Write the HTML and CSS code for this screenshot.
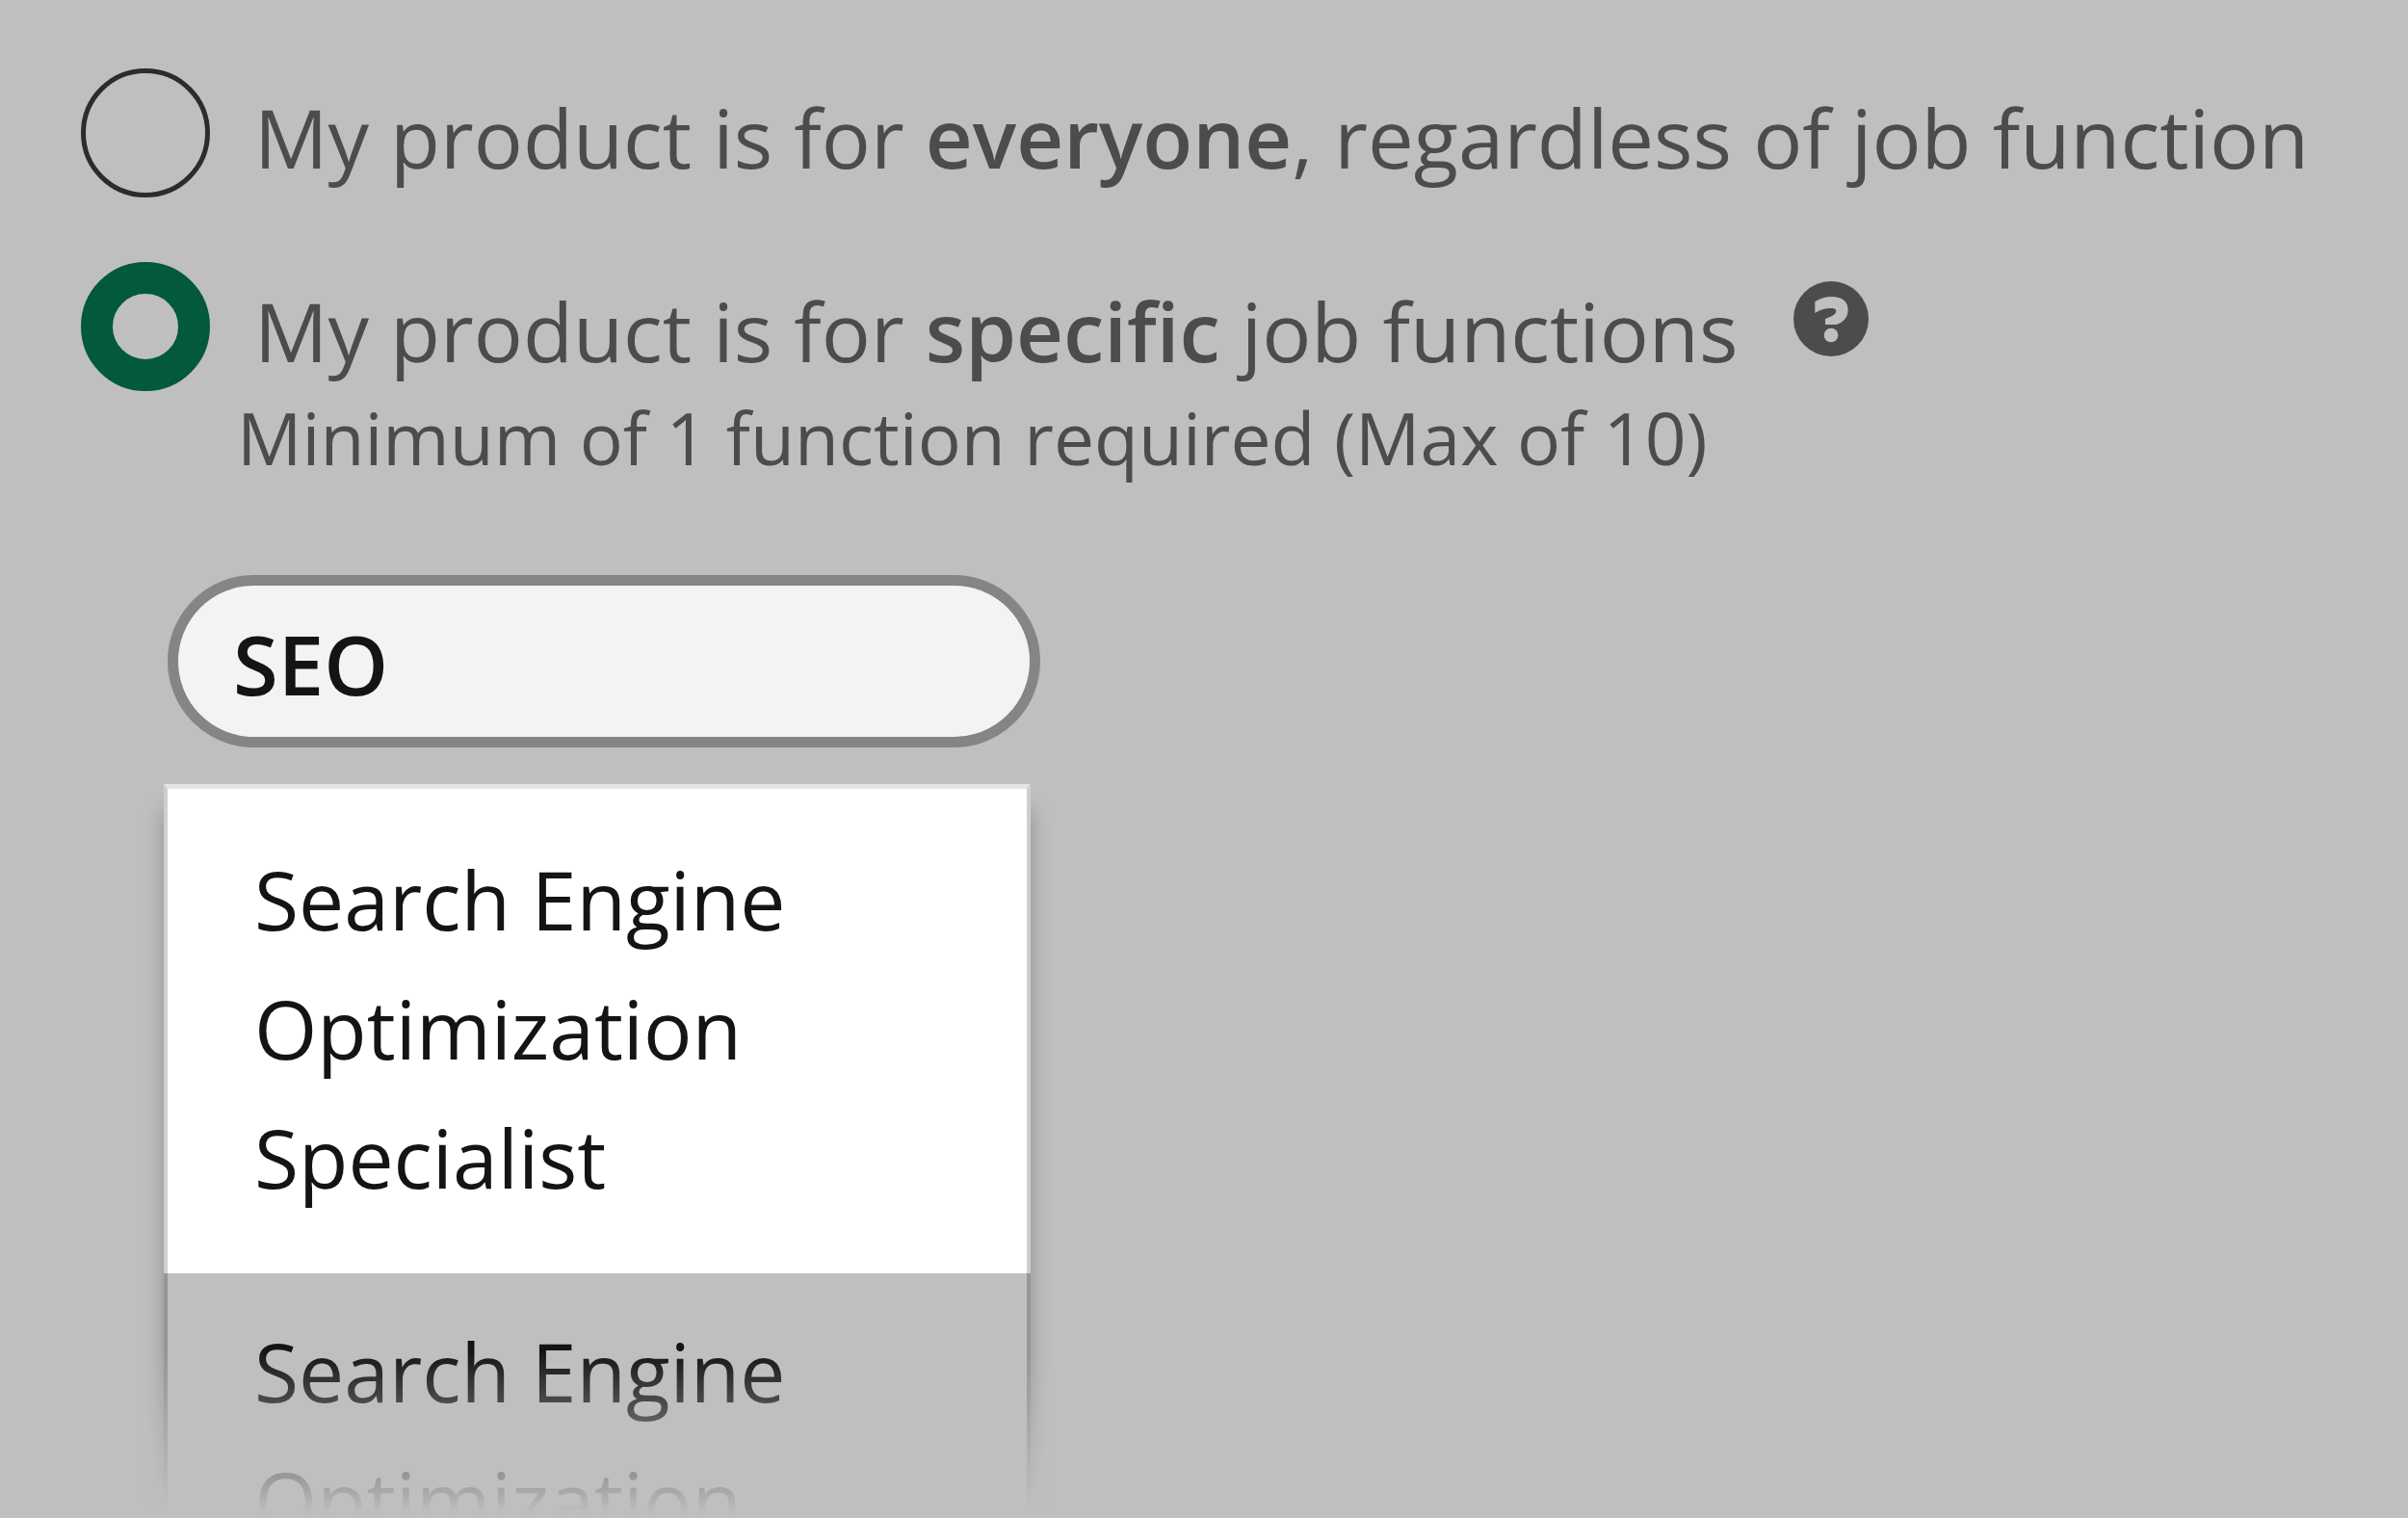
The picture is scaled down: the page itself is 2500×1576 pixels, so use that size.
FILE: index.html
```html
<!DOCTYPE html>
<html lang="en">
<head>
<meta charset="utf-8">
<meta name="viewport" content="width=device-width, initial-scale=1">
<title>Job functions</title>
<link rel="stylesheet" href="styles.css">
</head>
<body>
<form class="form">
  <div class="choice">
    <input class="radio" type="radio" name="audience" id="everyone">
    <label class="label" for="everyone">My product is for <strong>everyone</strong>, regardless of job function</label>
  </div>
  <div class="choice">
    <input class="radio" type="radio" name="audience" id="specific" checked aria-describedby="hint">
    <label class="label" for="specific">My product is for <strong>specific</strong> job functions</label>
    <button class="help" type="button" aria-label="Help">
      <svg class="help-icon" viewBox="0 0 78 78" aria-hidden="true">
        <circle cx="39" cy="39" r="39" fill="#4c4c4c"/>
        <path d="M22.3 21.3C27.5 17.8 33.500 16 40 16C50 16 56.600 21 56.600 29.500C56.600 37.500 52 42.500 44.500 45H33V39C40 36.500 44.300 34 44.300 31C44.300 28.800 42 28 38.500 28C33 28 27.500 29.800 22.300 33Z" fill="#bfbfbf"/>
        <circle cx="39" cy="56" r="7.300" fill="#bfbfbf"/>
      </svg>
    </button>
  </div>
  <p class="hint" id="hint">Minimum of 1 function required (Max of 10)</p>
  <div class="picker">
    <input class="search" type="text" value="SEO" aria-label="Job function">
    <div class="popup">
      <ul class="options" role="listbox" aria-label="Job functions">
        <li class="option option-active" role="option" aria-selected="true">Search Engine Optimization Specialist</li>
        <li class="option" role="option" aria-selected="false">Search Engine Optimization</li>
      </ul>
    </div>
  </div>
</form>
</body>
</html>
```
FILE: styles.css
```css
* {
  box-sizing: border-box;
}

body {
  margin: 0;
  background: #bfbfbf;
  color: #4c4c4c;
  font-family: "Open Sans", "Noto Sans", sans-serif;
}

.form {
  padding: 71px 84px 0;
}

.choice {
  display: flex;
  align-items: flex-start;
  height: 134px;
  margin-bottom: 67px;
}

.radio {
  appearance: none;
  flex: none;
  width: 134px;
  height: 134px;
  margin: 0;
  border: 5px solid #2c2c2c;
  border-radius: 50%;
}

.radio:checked {
  border: 33px solid #02593b;
}

.label {
  padding-left: 46px;
  font-size: 85px;
  line-height: 142px;
  white-space: nowrap;
}

strong {
  font-weight: 600;
}

.help {
  margin: 20px 0 0 57px;
  padding: 0;
  border: 0;
  background: none;
}

.help-icon {
  display: block;
  width: 78px;
  height: 78px;
}

.hint {
  margin: -67px 0 0;
  padding-left: 162px;
  font-size: 75px;
  line-height: 96px;
}

.picker {
  padding: 95px 0 0 60px;
}

.search {
  display: block;
  width: 906px;
  height: 179px;
  margin-left: 30px;
  padding: 4px 57px 0;
  border: 11px solid #858585;
  border-radius: 90px;
  background: #f3f3f3;
  color: #141414;
  font: inherit;
  font-size: 85px;
  font-weight: 600;
}

.popup {
  position: relative;
  width: 952px;
  height: 762px;
  margin-top: 38px;
  padding: 0 26px;
  overflow: hidden;
}

.popup::after {
  content: "";
  position: absolute;
  inset: auto 0 0;
  height: 174px;
  background: linear-gradient(transparent, #bfbfbf 97%);
  pointer-events: none;
}

.options {
  min-height: 900px;
  margin: 0;
  padding: 0;
  background: #bfbfbf;
  box-shadow: 0 28px 20px rgba(0, 0, 0, 0.26);
  list-style: none;
}

.option {
  height: 489px;
  padding: 35px 200px 0 90px;
  border: solid #939796;
  border-width: 0 4px;
  color: #141414;
  font-size: 84px;
  line-height: 134px;
}

.option-active {
  height: 508px;
  padding-top: 48px;
  border-width: 5px 4px 0;
  border-color: #e3e3e3 #cecece;
  background: #fff;
}
```
